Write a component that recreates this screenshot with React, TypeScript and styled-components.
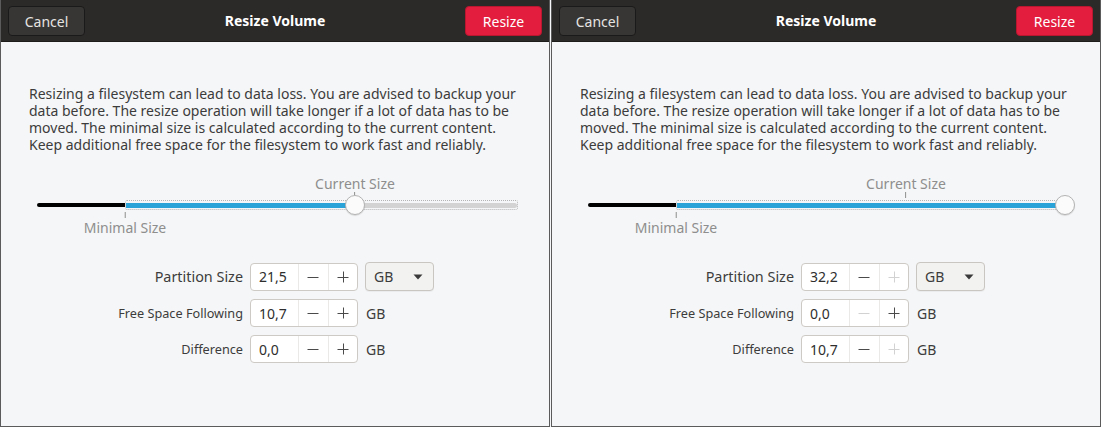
import React from "react";
import styled, { createGlobalStyle } from "styled-components";

const Global = createGlobalStyle`
  html, body {
    margin: 0;
    padding: 0;
    background: #f5f6f7;
  }
  body {
    font-family: "Noto Sans", "Open Sans", sans-serif;
  }
`;

const Page = styled.div`
  display: flex;
  gap: 1px;
  width: 1101px;
  height: 427px;
  background: #f5f6f7;
`;

const Dialog = styled.div`
  width: 550px;
  height: 427px;
  box-sizing: border-box;
  border: 1px solid #5b5b5b;
  border-top: none;
  display: flex;
  flex-direction: column;
  background: #f5f6f7;
`;

const Header = styled.div`
  height: 42px;
  box-sizing: border-box;
  background: #2c2a29;
  border-bottom: 1px solid #1d1c1b;
  display: flex;
  align-items: center;
  justify-content: space-between;
  padding: 0 7px 0 7px;
`;

const HeaderButton = styled.button<{ danger?: boolean }>`
  width: 77px;
  height: 30px;
  box-sizing: border-box;
  border-radius: 4px;
  border: 1px solid ${(p) => (p.danger ? "#b9172f" : "#1b1a1a")};
  background: ${(p) => (p.danger ? "#e21d3d" : "#383634")};
  color: ${(p) => (p.danger ? "#ffffff" : "#e6e4e2")};
  font-family: inherit;
  font-size: 14px;
  padding: 0;
  margin-top: 1px;
`;

const Title = styled.div`
  color: #ffffff;
  font-weight: 700;
  font-size: 14px;
`;

const Body = styled.div`
  flex: 1;
  padding: 43px 28px 0 28px;
  display: flex;
  flex-direction: column;
`;

const Notice = styled.p`
  margin: 0;
  font-size: 14px;
  line-height: 17px;
  color: #3c3c3c;
  white-space: nowrap;
`;

const SliderBox = styled.div`
  margin: 20px 0 0 8px;
  width: 481px;
  display: flex;
  flex-direction: column;
`;

const MarkRow = styled.div<{ below?: boolean }>`
  position: relative;
  height: ${(p) => (p.below ? 26 : 22)}px;
`;

const Mark = styled.div<{ below?: boolean }>`
  position: absolute;
  transform: translateX(-50%);
  display: flex;
  flex-direction: ${(p) => (p.below ? "column" : "column-reverse")};
  align-items: center;
  gap: ${(p) => (p.below ? 2 : 0)}px;
  color: #8e8e8e;
  font-size: 14px;
  line-height: 16px;
  white-space: nowrap;
  ${(p) => (p.below ? "top: -3px;" : "bottom: -3px;")}
`;

const Tick = styled.span`
  width: 1px;
  height: 6px;
  background: #8e8e8e;
`;

const Track = styled.div`
  position: relative;
  height: 20px;
  display: flex;
  align-items: center;
`;

const Used = styled.div`
  height: 4px;
  background: #000;
  border-radius: 2px 0 0 2px;
`;

const Trough = styled.div`
  flex: 1;
  height: 10px;
  box-sizing: border-box;
  border: 1px dotted #b4b4b4;
  border-radius: 2px;
  padding: 1px 0;
  display: flex;
  align-items: center;
`;

const Rail = styled.div`
  flex: 1;
  height: 5px;
  background: #d3d3d3;
  border-radius: 0 3px 3px 0;
  display: flex;
`;

const Fill = styled.div`
  height: 5px;
  background: #2aa3d8;
`;

const Thumb = styled.div`
  position: absolute;
  top: 0;
  width: 20px;
  height: 20px;
  box-sizing: border-box;
  transform: translateX(-50%);
  border-radius: 50%;
  background: #fbfbfb;
  border: 1px solid #b3b3b3;
  box-shadow: 0 1px 1px rgba(0, 0, 0, 0.12);
`;

const Form = styled.div`
  margin-top: 21px;
  display: grid;
  grid-template-columns: 214px auto 1fr;
  column-gap: 7px;
  row-gap: 8px;
  align-items: center;
`;

const Label = styled.div<{ big?: boolean }>`
  text-align: right;
  font-size: ${(p) => (p.big ? 14.4 : 12.7)}px;
  color: #3c3c3c;
  white-space: nowrap;
`;

const Spin = styled.div`
  display: flex;
  width: 108px;
  height: 28px;
  box-sizing: border-box;
  border: 1px solid #cdc9c5;
  border-radius: 4px;
  background: #ffffff;
  overflow: hidden;
`;

const SpinValue = styled.div`
  width: 48px;
  padding-left: 8px;
  box-sizing: border-box;
  display: flex;
  align-items: center;
  font-size: 14px;
  color: #2e2e2e;
`;

const SpinBtn = styled.div<{ off?: boolean }>`
  width: 29px;
  border-left: 1px solid #ebe9e7;
  display: flex;
  align-items: center;
  justify-content: center;
  color: ${(p) => (p.off ? "#d2d2d2" : "#4a4a4a")};
`;

const Unit = styled.div`
  font-size: 14px;
  color: #3c3c3c;
  padding-left: 1px;
`;

const Combo = styled.div`
  width: 69px;
  height: 29px;
  box-sizing: border-box;
  border: 1px solid #c9c5c1;
  border-radius: 4px;
  background: #f2f2f1;
  box-shadow: 0 1px 0 rgba(0, 0, 0, 0.04);
  display: flex;
  align-items: center;
  justify-content: space-between;
  padding: 0 10px 0 8px;
  font-size: 14px;
  color: #3c3c3c;
`;

const Caret = () => (
  <svg width="10" height="6" viewBox="0 0 10 6">
    <path d="M0.5 0.5h9L5 5.5z" fill="#3a3a3a" />
  </svg>
);

const Minus = () => (
  <svg width="12" height="12" viewBox="0 0 12 12">
    <path d="M0.5 6.5h11" stroke="currentColor" strokeWidth="1" />
  </svg>
);

const Plus = () => (
  <svg width="12" height="12" viewBox="0 0 12 12">
    <path d="M0.5 6.5h11M6.5 0.5v11" stroke="currentColor" strokeWidth="1" />
  </svg>
);

type SpinRow = {
  label: string;
  value: string;
  minusOff?: boolean;
  plusOff?: boolean;
  combo?: boolean;
};

type State = {
  thumb: number; // px along the 481px scale
  rows: SpinRow[];
};

const MIN = 88;
const CURRENT = 318;
const WIDTH = 481;

const SpinField: React.FC<SpinRow> = ({ value, minusOff, plusOff }) => (
  <Spin>
    <SpinValue>{value}</SpinValue>
    <SpinBtn off={minusOff}>
      <Minus />
    </SpinBtn>
    <SpinBtn off={plusOff}>
      <Plus />
    </SpinBtn>
  </Spin>
);

const ResizeDialog: React.FC<State> = ({ thumb, rows }) => (
  <Dialog>
    <Header>
      <HeaderButton>Cancel</HeaderButton>
      <Title>Resize Volume</Title>
      <HeaderButton danger>Resize</HeaderButton>
    </Header>
    <Body>
      <Notice>
        Resizing a filesystem can lead to data loss. You are advised to backup your
        <br />
        data before. The resize operation will take longer if a lot of data has to be
        <br />
        moved. The minimal size is calculated according to the current content.
        <br />
        Keep additional free space for the filesystem to work fast and reliably.
      </Notice>
      <SliderBox>
        <MarkRow>
          <Mark style={{ left: CURRENT }}>
            <Tick />
            Current Size
          </Mark>
        </MarkRow>
        <Track>
          <Used style={{ width: MIN }} />
          <Trough>
            <Rail>
              <Fill style={{ width: thumb - MIN }} />
            </Rail>
          </Trough>
          <Thumb style={{ left: Math.min(thumb, WIDTH - 4) }} />
        </Track>
        <MarkRow below>
          <Mark below style={{ left: MIN }}>
            <Tick />
            Minimal Size
          </Mark>
        </MarkRow>
      </SliderBox>
      <Form>
        {rows.map((r) => (
          <React.Fragment key={r.label}>
            <Label big={r.combo}>{r.label}</Label>
            <SpinField {...r} />
            {r.combo ? (
              <div>
                <Combo>
                  GB
                  <Caret />
                </Combo>
              </div>
            ) : (
              <Unit>GB</Unit>
            )}
          </React.Fragment>
        ))}
      </Form>
    </Body>
  </Dialog>
);

const left: State = {
  thumb: CURRENT,
  rows: [
    { label: "Partition Size", value: "21,5", combo: true },
    { label: "Free Space Following", value: "10,7" },
    { label: "Difference", value: "0,0" },
  ],
};

const right: State = {
  thumb: WIDTH - 2,
  rows: [
    { label: "Partition Size", value: "32,2", combo: true, plusOff: true },
    { label: "Free Space Following", value: "0,0", minusOff: true },
    { label: "Difference", value: "10,7", plusOff: true },
  ],
};

export default function App() {
  return (
    <>
      <Global />
      <Page>
        <ResizeDialog {...left} />
        <ResizeDialog {...right} />
      </Page>
    </>
  );
}
